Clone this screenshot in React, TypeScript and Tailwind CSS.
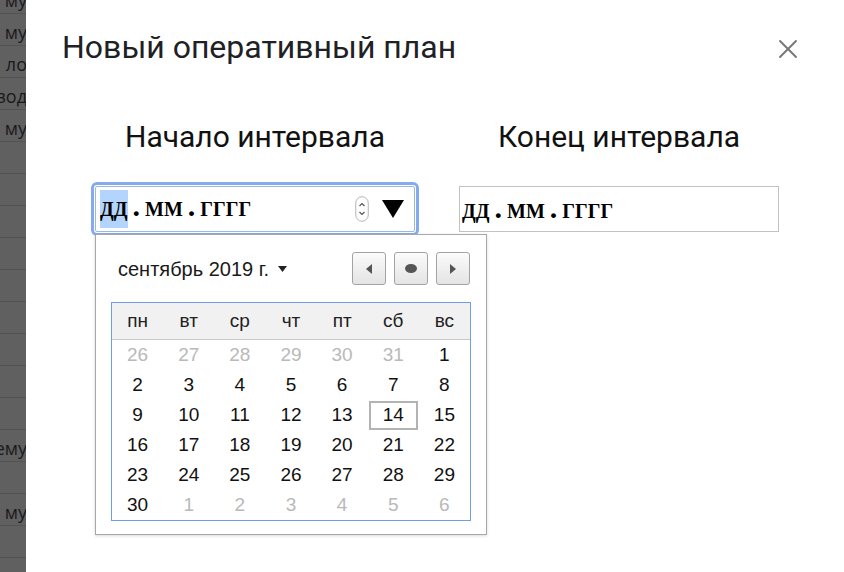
import { X } from "lucide-react";

const sidebarRows = [
  "му", "му", "ло", "вод", "му", "", "", "", "", "", "", "", "", "", "ему", "", "му", "", "",
];

const weekDays = ["пн", "вт", "ср", "чт", "пт", "сб", "вс"];

type Day = { n: number; out?: boolean; today?: boolean };

function buildDays(): Day[] {
  const days: Day[] = [];
  for (let n = 26; n <= 31; n++) days.push({ n, out: true });
  for (let n = 1; n <= 30; n++) days.push({ n, today: n === 14 });
  for (let n = 1; n <= 6; n++) days.push({ n, out: true });
  return days;
}

function DateText({ selected }: { selected?: boolean }) {
  return (
    <div className="flex items-baseline font-['Liberation_Serif',serif] font-bold text-[20px] leading-[24px] text-black">
      <span className={selected ? "bg-[#b3d4fc] py-[7px]" : ""}>ДД</span>
      <span className="mx-[5px] text-[30px] leading-[24px]">.</span>
      <span>ММ</span>
      <span className="mx-[5px] text-[30px] leading-[24px]">.</span>
      <span>ГГГГ</span>
    </div>
  );
}

function Spinner() {
  return (
    <svg width="14" height="26" viewBox="0 0 14 26" fill="none">
      <rect x="0.75" y="0.75" width="12.5" height="24.5" rx="6.25" stroke="#b5b5b5" strokeWidth="1" />
      <path d="M4.5 10 L7 7.5 L9.5 10" stroke="#555" strokeWidth="1.2" />
      <path d="M4.5 16 L7 18.5 L9.5 16" stroke="#555" strokeWidth="1.2" />
    </svg>
  );
}

function NavButton({ children }: { children: React.ReactNode }) {
  return (
    <button className="w-[34px] h-[33px] rounded-[3px] border border-[#a3a3a3] bg-gradient-to-b from-[#fbfbfb] to-[#e4e4e4] flex items-center justify-center">
      {children}
    </button>
  );
}

function CalendarPopup() {
  const days = buildDays();
  return (
    <div className="absolute -left-[1px] top-[47px] w-[392px] h-[301px] bg-white border border-[#a8a8a8] px-[15px] pt-[17px] shadow-[0_1px_3px_rgba(0,0,0,0.15)] font-['Liberation_Sans',Arial,sans-serif]">
      <div className="flex items-center justify-between h-[33px] pl-[7px] pr-[1px]">
        <div className="flex items-center text-[20px] text-[#1a1a1a]">
          <span>сентябрь 2019 г.</span>
          <svg width="9" height="6" viewBox="0 0 9 6" className="ml-[9px]">
            <polygon points="0,0 9,0 4.5,6" fill="#222" />
          </svg>
        </div>
        <div className="flex gap-[8px]">
          <NavButton>
            <svg width="6" height="10" viewBox="0 0 6 10">
              <polygon points="6,0 6,10 0,5" fill="#555" />
            </svg>
          </NavButton>
          <NavButton>
            <svg width="12" height="9" viewBox="0 0 12 9">
              <ellipse cx="6" cy="4.5" rx="6" ry="4.5" fill="#555" />
            </svg>
          </NavButton>
          <NavButton>
            <svg width="6" height="10" viewBox="0 0 6 10">
              <polygon points="0,0 6,5 0,10" fill="#555" />
            </svg>
          </NavButton>
        </div>
      </div>
      <div className="mt-[17px] w-[360px] border border-[#6f9ee2]">
        <div className="grid grid-cols-7 h-[37px] bg-[#f1f1f1] border-b border-[#c9c9c9]">
          {weekDays.map((d) => (
            <div key={d} className="flex items-center justify-center text-[19px] text-[#222]">
              {d}
            </div>
          ))}
        </div>
        <div className="grid grid-cols-7">
          {days.map((d, i) => (
            <div key={i} className="h-[30px] flex items-center justify-center">
              <div
                className={
                  "w-[49px] h-[29px] flex items-center justify-center text-[19px] " +
                  (d.out ? "text-[#b9b9b9] " : "text-[#111] ") +
                  (d.today ? "border-2 border-[#b3b3b3]" : "")
                }
              >
                {d.n}
              </div>
            </div>
          ))}
        </div>
      </div>
    </div>
  );
}

export default function App() {
  return (
    <div className="w-[844px] h-[572px] flex overflow-hidden bg-white">
      <aside className="w-[26px] shrink-0 bg-[#606060] overflow-hidden">
        <div className="-mt-[18px] flex flex-col">
          {sidebarRows.map((t, i) => (
            <div
              key={i}
              className="h-8 shrink-0 border-b border-[#525252] flex items-center justify-end overflow-hidden whitespace-nowrap text-[18px] text-[#1a1a1a] font-['Open_Sans',sans-serif] pt-[5px] -mr-[1px]"
            >
              {t}
            </div>
          ))}
        </div>
      </aside>

      <main className="flex-1 bg-white">
        <header className="flex items-start justify-between pt-[27px] pl-[36px] pr-[40px]">
          <h1 className="text-[32px] leading-[40px] text-[#202124] font-['Roboto',sans-serif]">
            Новый оперативный план
          </h1>
          <button className="mt-[6px] text-[#777]">
            <X size={32} strokeWidth={1.4} />
          </button>
        </header>

        <div className="flex gap-[44px] pl-[69px] mt-[52px] font-['Roboto',sans-serif]">
          <div className="w-[320px] flex flex-col items-center">
            <h2 className="text-[30px] leading-[36px] text-[#111]">Начало интервала</h2>
            <div className="relative mt-[31px] w-[320px] h-[46px] border border-[#9db7df] rounded-[2px] outline-[3px] outline-solid outline-[#84abec] outline-offset-[1px] flex items-center pl-[4px] pr-[10px]">
              <DateText selected />
              <div className="ml-auto flex items-center gap-[13px]">
                <Spinner />
                <svg width="22" height="18" viewBox="0 0 22 18">
                  <polygon points="0,0 22,0 11,18" fill="#000" />
                </svg>
              </div>
              <CalendarPopup />
            </div>
          </div>

          <div className="w-[320px] flex flex-col items-center">
            <h2 className="text-[30px] leading-[36px] text-[#111]">Конец интервала</h2>
            <div className="mt-[31px] w-[320px] h-[46px] border border-[#c2c2c2] flex items-center pl-[2px]">
              <DateText />
            </div>
          </div>
        </div>
      </main>
    </div>
  );
}
